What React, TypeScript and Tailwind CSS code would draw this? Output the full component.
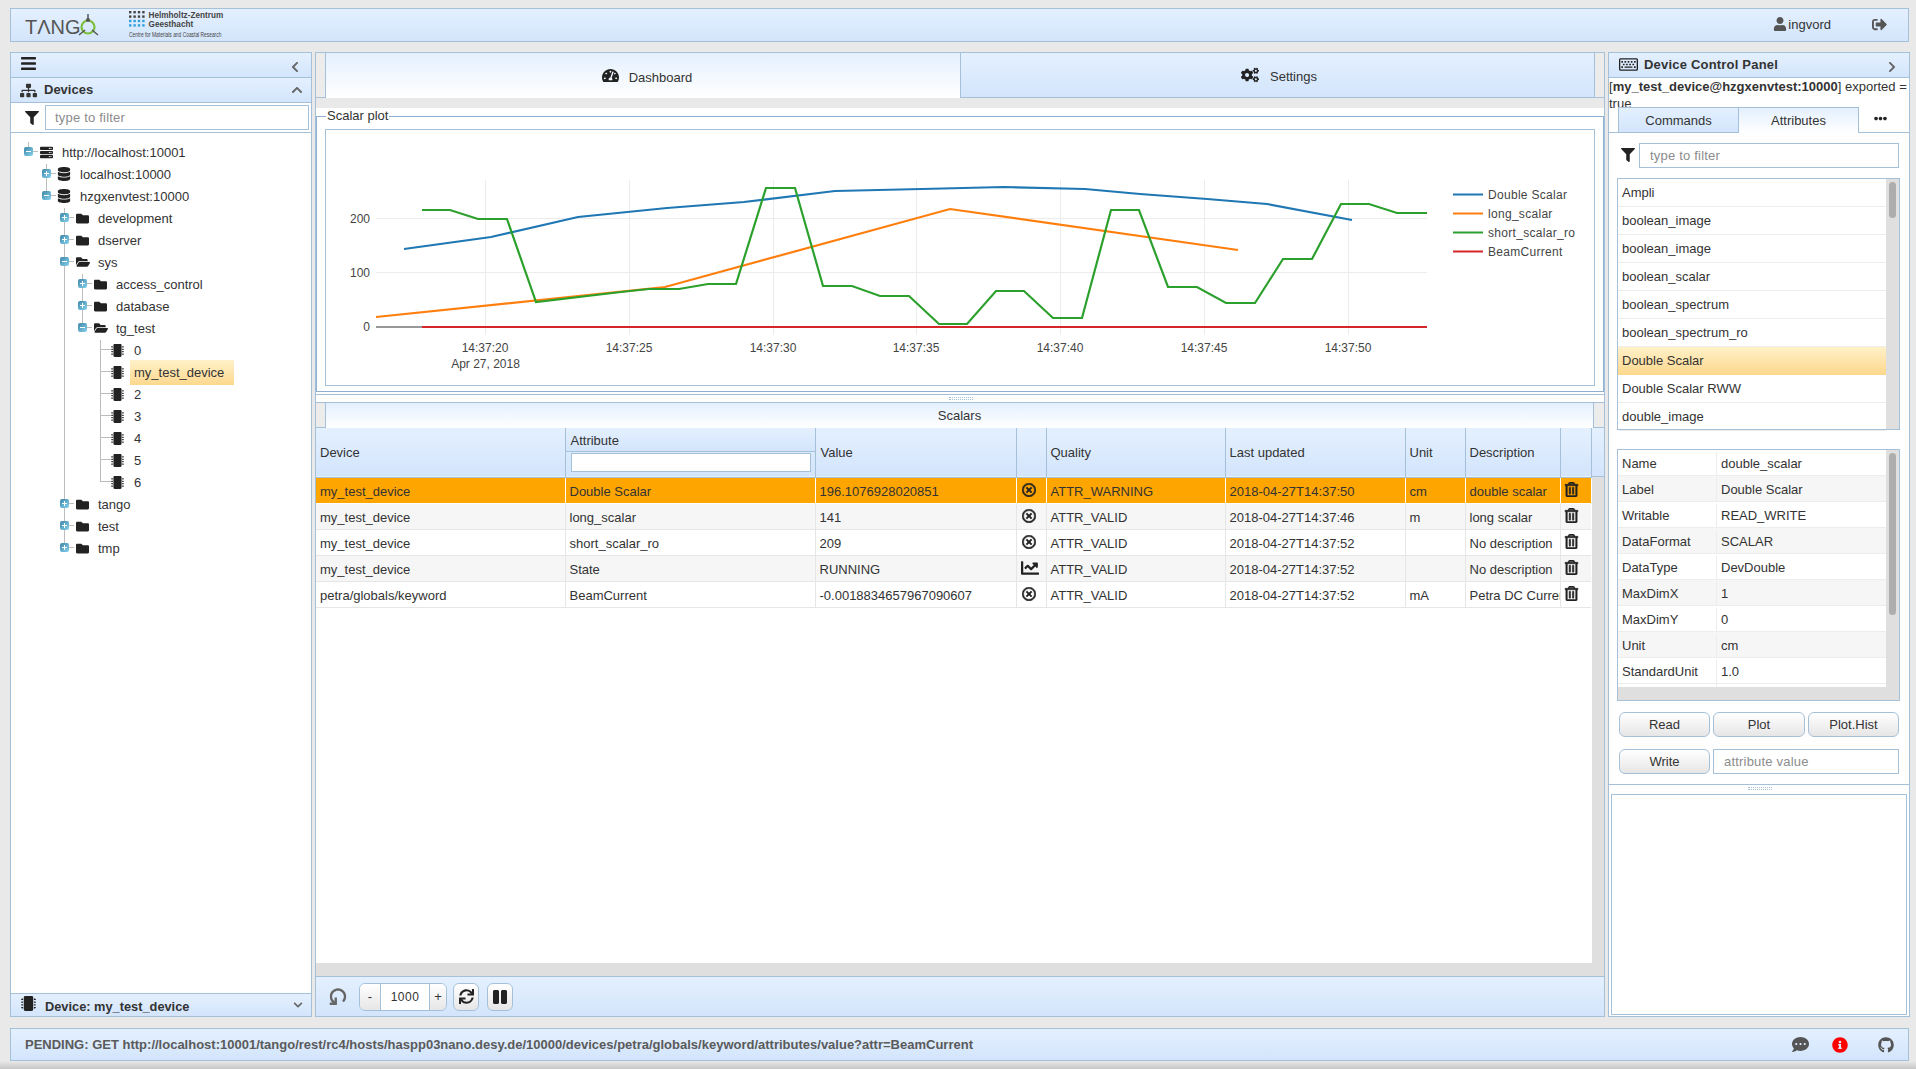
import type { ReactNode } from "react";
import {
  FaBars,
  FaChartLine,
  FaChevronDown,
  FaChevronLeft,
  FaChevronRight,
  FaChevronUp,
  FaCogs,
  FaCommentDots,
  FaDatabase,
  FaEllipsisH,
  FaFilter,
  FaFolder,
  FaFolderOpen,
  FaGithub,
  FaInfoCircle,
  FaMicrochip,
  FaPause,
  FaRegKeyboard,
  FaRegTimesCircle,
  FaRegTrashAlt,
  FaServer,
  FaSignOutAlt,
  FaSitemap,
  FaSync,
  FaTachometerAlt,
  FaUndo,
  FaUser,
} from "react-icons/fa";

const headerBg = "bg-gradient-to-b from-[#e4f0fe] to-[#d3e5fc]";
const lightBg = "bg-gradient-to-b from-[#e4f0fe] to-white";
const line = "border-[#a5c1d9]";

type TreeRow = {
  label: string;
  depth: number;
  kind: "server" | "db" | "folder" | "open" | "chip";
  open?: boolean;
  selected?: boolean;
};

const treeRows: TreeRow[] = [
  { label: "http://localhost:10001", depth: 0, kind: "server", open: true },
  { label: "localhost:10000", depth: 1, kind: "db" },
  { label: "hzgxenvtest:10000", depth: 1, kind: "db", open: true },
  { label: "development", depth: 2, kind: "folder" },
  { label: "dserver", depth: 2, kind: "folder" },
  { label: "sys", depth: 2, kind: "open", open: true },
  { label: "access_control", depth: 3, kind: "folder" },
  { label: "database", depth: 3, kind: "folder" },
  { label: "tg_test", depth: 3, kind: "open", open: true },
  { label: "0", depth: 4, kind: "chip" },
  { label: "my_test_device", depth: 4, kind: "chip", selected: true },
  { label: "2", depth: 4, kind: "chip" },
  { label: "3", depth: 4, kind: "chip" },
  { label: "4", depth: 4, kind: "chip" },
  { label: "5", depth: 4, kind: "chip" },
  { label: "6", depth: 4, kind: "chip" },
  { label: "tango", depth: 2, kind: "folder" },
  { label: "test", depth: 2, kind: "folder" },
  { label: "tmp", depth: 2, kind: "folder" },
];

const depthPad = ["pl-[13px]", "pl-[31px]", "pl-[49px]", "pl-[67px]", "pl-[85px]"];

const scalars = [
  ["my_test_device", "Double Scalar", "196.1076928020851", "x", "ATTR_WARNING", "2018-04-27T14:37:50", "cm", "double scalar"],
  ["my_test_device", "long_scalar", "141", "x", "ATTR_VALID", "2018-04-27T14:37:46", "m", "long scalar"],
  ["my_test_device", "short_scalar_ro", "209", "x", "ATTR_VALID", "2018-04-27T14:37:52", "", "No description"],
  ["my_test_device", "State", "RUNNING", "chart", "ATTR_VALID", "2018-04-27T14:37:52", "", "No description"],
  ["petra/globals/keyword", "BeamCurrent", "-0.0018834657967090607", "x", "ATTR_VALID", "2018-04-27T14:37:52", "mA", "Petra DC Current"],
];

const attributes = [
  "Ampli",
  "boolean_image",
  "boolean_image",
  "boolean_scalar",
  "boolean_spectrum",
  "boolean_spectrum_ro",
  "Double Scalar",
  "Double Scalar RWW",
  "double_image",
];

const attrInfo = [
  ["Name", "double_scalar"],
  ["Label", "Double Scalar"],
  ["Writable", "READ_WRITE"],
  ["DataFormat", "SCALAR"],
  ["DataType", "DevDouble"],
  ["MaxDimX", "1"],
  ["MaxDimY", "0"],
  ["Unit", "cm"],
  ["StandardUnit", "1.0"],
];

const series = [
  {
    name: "Double Scalar",
    color: "#1f77b4",
    points:
      "404,249 491,237 578,217 667,208 744,202 835,191 922,189 1004,187 1085,189 1140,194 1207,199 1267,204 1352,220",
  },
  { name: "long_scalar", color: "#ff7f0e", points: "376,317 665,287 950,209 1238,250" },
  {
    name: "short_scalar_ro",
    color: "#2ca02c",
    points:
      "422,210 450,210 478,219 507,219 536,302 621,292 649,289 679,289 708,284 736,284 766,188 795,188 823,286 852,286 880,296 909,296 939,324 967,324 996,291 1024,291 1053,318 1082,318 1111,210 1139,210 1168,287 1197,287 1226,303 1255,303 1283,259 1312,259 1341,204 1369,204 1397,213 1427,213",
  },
  { name: "BeamCurrent", color: "#d62728", points: "422,327 1427,327" },
];

const ticks = [
  { x: 485.5, label: "14:37:20" },
  { x: 629.5, label: "14:37:25" },
  { x: 773.5, label: "14:37:30" },
  { x: 916.5, label: "14:37:35" },
  { x: 1060.5, label: "14:37:40" },
  { x: 1204.5, label: "14:37:45" },
  { x: 1348.5, label: "14:37:50" },
];

function TreeIcon({ kind }: { kind: TreeRow["kind"] }) {
  if (kind === "server") return <FaServer className="text-[13px]" />;
  if (kind === "db") return <FaDatabase className="text-[14px] -ml-[1px]" />;
  if (kind === "folder") return <FaFolder className="text-[13px]" />;
  if (kind === "open") return <FaFolderOpen className="text-[14px]" />;
  return <FaMicrochip className="text-[13px] -ml-[1px]" />;
}

function Expander({ open }: { open?: boolean }) {
  return (
    <span className="flex items-center w-[16px] h-[9px] -mt-[2px] shrink-0">
      <span className="relative w-[9px] h-[9px] rounded-[2px] bg-gradient-to-br from-[#3f87a8] to-[#86d2ee] shrink-0">
        <span className="absolute left-[2px] top-[4px] w-[5px] h-px bg-white" />
        {!open && <span className="absolute left-[4px] top-[2px] w-px h-[5px] bg-white" />}
      </span>
      <span className="w-[5px] h-px bg-[#bdbdbd]" />
    </span>
  );
}

function Tree() {
  return (
    <div className="relative flex-1 bg-white pt-[8px] text-[13px] text-[#333]">
      <div className="absolute left-[17px] top-[9px] w-px h-[5px] bg-[#bdbdbd]" />
      <div className="absolute left-[35px] top-[31px] w-px h-[27px] bg-[#bdbdbd]" />
      <div className="absolute left-[53px] top-[75px] w-px h-[340px] bg-[#bdbdbd]" />
      <div className="absolute left-[71px] top-[141px] w-px h-[53px] bg-[#bdbdbd]" />
      <div className="absolute left-[89px] top-[207px] w-px h-[142px] bg-[#bdbdbd]" />
      {treeRows.map((row, i) => (
        <div key={i} className={`relative flex items-center h-[22px] ${depthPad[row.depth]}`}>
          {row.kind === "chip" ? (
            <span className="flex w-[16px] -mt-[2px] pl-[4px] shrink-0">
              <span className="w-[11px] h-px bg-[#bdbdbd]" />
            </span>
          ) : (
            <Expander open={row.open} />
          )}
          <span className="w-[18px] shrink-0 text-[#222]">
            <TreeIcon kind={row.kind} />
          </span>
          <span
            className={`flex items-center h-[25px] px-[4px] pt-[2px] whitespace-nowrap ${
              row.selected ? "bg-gradient-to-b from-[#fff1c8] to-[#fdd88e] pr-[10px]" : ""
            }`}
          >
            {row.label}
          </span>
        </div>
      ))}
    </div>
  );
}

function LeftPanel() {
  return (
    <aside className={`flex flex-col w-[302px] border ${line} bg-white`}>
      <div className={`flex items-center justify-between h-[25px] pl-[10px] pr-[10px] border-b ${line} ${headerBg}`}>
        <FaBars className="text-[17px] text-[#222] -mt-[4px] -ml-[1px]" />
        <FaChevronLeft className="text-[12px] text-[#666] mt-[4px]" />
      </div>
      <div className={`flex items-center justify-between h-[25px] pl-[10px] pr-[8px] border-b ${line} ${headerBg}`}>
        <span className="flex items-center gap-[7px] font-bold text-[13px] text-[#333]">
          <FaSitemap className="text-[17px] text-[#333] -ml-[1px]" />
          Devices
        </span>
        <FaChevronUp className="text-[12px] text-[#666]" />
      </div>
      <div className={`flex items-center h-[30px] border-b ${line} pl-[14px] pr-[2px]`}>
        <FaFilter className="text-[14px] text-[#222] mr-[6px]" />
        <input
          placeholder="type to filter"
          className={`w-[264px] h-[25px] border ${line} px-[9px] text-[13px] tracking-[0.2px] placeholder:text-[#8c8c8c]`}
        />
      </div>
      <Tree />
      <div className={`flex items-center justify-between h-[23px] pl-[10px] pr-[8px] border-t ${line} ${headerBg}`}>
        <span className="flex items-center gap-[9px] font-bold text-[12.8px] text-[#333] pt-[3px]">
          <FaMicrochip className="text-[15px] text-[#222] -mt-[7px]" />
          Device: my_test_device
        </span>
        <FaChevronDown className="text-[10px] text-[#666]" />
      </div>
    </aside>
  );
}

function Chart() {
  return (
    <svg viewBox="326 130 1268 255" className="block w-[1268px] h-[255px] text-[12px]" fill="#444">
      {ticks.map((t) => (
        <line key={t.x} x1={t.x} x2={t.x} y1={180} y2={335} stroke="#ececec" />
      ))}
      <line x1={376} x2={1427} y1={218.5} y2={218.5} stroke="#ececec" />
      <line x1={376} x2={1427} y1={272.5} y2={272.5} stroke="#ececec" />
      <line x1={376} x2={422} y1={327} y2={327} stroke="#333" />
      {series.map((s) => (
        <polyline key={s.name} points={s.points} fill="none" stroke={s.color} strokeWidth={2.2} />
      ))}
      <text x={370} y={222.5} textAnchor="end">200</text>
      <text x={370} y={277} textAnchor="end">100</text>
      <text x={370} y={331} textAnchor="end">0</text>
      {ticks.map((t) => (
        <text key={t.label} x={t.x - 0.5} y={352} textAnchor="middle">
          {t.label}
        </text>
      ))}
      <text x={485.5} y={368} textAnchor="middle">Apr 27, 2018</text>
      {series.map((s, i) => (
        <g key={s.name}>
          <line x1={1453} x2={1483} y1={194.5 + i * 19} y2={194.5 + i * 19} stroke={s.color} strokeWidth={2} />
          <text x={1488} y={198.5 + i * 19} letterSpacing={0.3}>
            {s.name}
          </text>
        </g>
      ))}
    </svg>
  );
}

function PlotSection() {
  return (
    <div className="bg-white">
      <fieldset className="w-[1287px] h-[284px] border border-[#8fb0d0] px-[8px]">
        <legend className="ml-[1px] px-[1px] h-[16px] leading-[16px] text-[13px] text-[#333]">Scalar plot</legend>
        <div className={`mt-[5px] w-[1270px] h-[257px] border ${line}`}>
          <Chart />
        </div>
      </fieldset>
      <div className={`relative h-[8px] mt-[2px] border-t ${line}`}>
        <div className="absolute left-[633px] top-[2px] w-[24px] h-[3px] border-y border-dotted border-[#a5c1d9]" />
      </div>
    </div>
  );
}

function StatusCellIcon({ type }: { type: string }) {
  if (type === "chart") return <FaChartLine className="text-[18px] text-[#222] -mt-[4px]" />;
  return <FaRegTimesCircle className="text-[14px] text-[#222] stroke-current stroke-[24px] ml-[1px] -mt-[5px]" />;
}

const headCell = `border-r ${line} px-[4px] text-left font-normal align-middle`;

function ScalarsTable() {
  return (
    <table className="self-start table-fixed w-[1275px] border-collapse text-[13px] text-[#333]">
      <colgroup>
        <col className="w-[249px]" />
        <col className="w-[250px]" />
        <col className="w-[201px]" />
        <col className="w-[30px]" />
        <col className="w-[179px]" />
        <col className="w-[180px]" />
        <col className="w-[60px]" />
        <col className="w-[95px]" />
        <col className="w-[31px]" />
      </colgroup>
      <thead>
        <tr className={`h-[49px] border-b ${line} ${headerBg}`}>
          <th className={headCell}>Device</th>
          <th className={`border-r ${line} p-0 font-normal align-top`}>
            <div className={`flex items-center h-[24px] px-[5px] pt-[2px] border-b ${line} ${headerBg}`}>Attribute</div>
            <div className="pt-[1px] pl-[5px]">
              <input className={`block w-[240px] h-[19px] bg-white border ${line}`} />
            </div>
          </th>
          <th className={`${headCell} pl-[5px]`}>Value</th>
          <th className={headCell} />
          <th className={headCell}>Quality</th>
          <th className={headCell}>Last updated</th>
          <th className={headCell}>Unit</th>
          <th className={headCell}>Description</th>
          <th className={headCell} />
        </tr>
      </thead>
      <tbody>
        {scalars.map((row, i) => {
          const warn = i === 0;
          const bg = warn ? "bg-[#ffa500]" : i % 2 === 1 ? "bg-[#f6f6f6]" : "bg-white";
          const cell = `h-[26px] px-[4px] pt-[4px] pb-0 border-r border-b whitespace-nowrap overflow-hidden ${
            warn ? "border-white" : "border-[#e6e6e6]"
          }`;
          return (
            <tr key={i} className={bg}>
              <td className={cell}>{row[0]}</td>
              <td className={cell}>{row[1]}</td>
              <td className={cell}>{row[2]}</td>
              <td className={cell}>
                <StatusCellIcon type={row[3]} />
              </td>
              <td className={cell}>{row[4]}</td>
              <td className={cell}>{row[5]}</td>
              <td className={cell}>{row[6]}</td>
              <td className={`${cell} pr-0`}>{row[7]}</td>
              <td className={`${cell} border-r-0`}>
                <FaRegTrashAlt className="text-[15px] text-[#222] stroke-current stroke-[20px] -ml-[1px] -mt-[5px]" />
              </td>
            </tr>
          );
        })}
      </tbody>
    </table>
  );
}

function Toolbar() {
  const btn = `flex items-center justify-center w-[26px] h-[28px] rounded-[6px] border ${line} bg-gradient-to-b from-white to-[#e6e6e6] text-[#222]`;
  return (
    <div className={`flex items-center h-[40px] pl-[13px] border-t ${line} ${headerBg}`}>
      <FaUndo className="text-[17px] text-[#666] w-[18px] -rotate-90" />
      <div className={`flex items-center ml-[12px] w-[88px] h-[28px] rounded-[6px] border ${line} overflow-hidden text-[13px] text-[#333]`}>
        <span className="flex items-center justify-center w-[20px] h-full bg-gradient-to-b from-white to-[#e6e6e6]">-</span>
        <span className={`flex items-center justify-center w-[50px] h-full bg-white border-x ${line} tracking-[0.5px] text-[12px]`}>1000</span>
        <span className="flex items-center justify-center flex-1 h-full bg-gradient-to-b from-white to-[#e6e6e6]">+</span>
      </div>
      <span className={`${btn} ml-[6px]`}>
        <FaSync className="text-[15px]" />
      </span>
      <span className={`${btn} ml-[8px]`}>
        <FaPause className="text-[16px]" />
      </span>
    </div>
  );
}

function CenterPanel() {
  return (
    <main className={`flex flex-col w-[1290px] border ${line} bg-[#e9e9e9]`}>
      <div className="flex h-[45px] text-[13px] text-[#333]">
        <div className={`w-[10px] border-r border-b ${line} bg-[#ececec]`} />
        <div className={`flex items-center justify-center gap-[10px] w-[634px] pl-[8px] pt-[4px] ${lightBg}`}>
          <FaTachometerAlt className="text-[17px] text-[#222] -mt-[4px]" />
          Dashboard
        </div>
        <div className={`flex items-center justify-center gap-[11px] w-[634px] pl-[3px] pt-[3px] border-l border-b ${line} ${headerBg}`}>
          <FaCogs className="text-[18px] text-[#222] -mt-[4px]" />
          Settings
        </div>
        <div className={`flex-1 border-l border-b ${line} bg-[#ececec]`} />
      </div>
      <div className="h-[10px]" />
      <PlotSection />
      <div className={`flex h-[26px] border-t ${line} text-[13px] text-[#333]`}>
        <div className={`w-[10px] border-r border-b ${line} bg-[#ececec]`} />
        <div className={`flex items-center justify-center w-[1267px] ${lightBg}`}>Scalars</div>
        <div className={`flex-1 border-l border-b ${line} bg-[#ececec]`} />
      </div>
      <div className="flex flex-1 min-h-0 bg-white">
        <ScalarsTable />
        <div className="flex flex-col flex-1">
          <div className={`h-[49px] border-b ${line} ${headerBg}`} />
          <div className="flex-1 bg-[#dfdfdf]" />
        </div>
      </div>
      <div className="h-[13px] bg-[#dfdfdf]" />
      <Toolbar />
    </main>
  );
}

function SmallButton({ children, className }: { children: ReactNode; className: string }) {
  return (
    <button className={`h-[25px] rounded-[6px] border ${line} bg-gradient-to-b from-white to-[#e6e6e6] text-[13px] text-[#333] ${className}`}>
      {children}
    </button>
  );
}

function RightPanel() {
  return (
    <aside className={`flex flex-col w-[302px] border ${line} bg-white text-[13px] text-[#333]`}>
      <div className={`flex items-center justify-between h-[25px] pl-[10px] pr-[11px] border-b ${line} ${headerBg}`}>
        <span className="flex items-center gap-[6px] font-bold tracking-[0.2px]">
          <FaRegKeyboard className="text-[19px] text-[#222] -mt-[2px]" />
          Device Control Panel
        </span>
        <FaChevronRight className="text-[12px] text-[#666] mt-[3px]" />
      </div>
      <div className="h-[29px] leading-[17px] pt-0">
        [<b>my_test_device@hzgxenvtest:10000</b>] exported = true
      </div>
      <div className={`relative flex h-[26px] pl-[9px] border-b ${line}`}>
        <div className={`flex items-center justify-center w-[121px] h-[26px] pt-[1px] border ${line} ${headerBg}`}>Commands</div>
        <div className={`flex items-center justify-center w-[120px] h-[26px] border-t border-r ${line} bg-gradient-to-b from-[#e4f0fe] to-white`}>Attributes</div>
        <div className="flex items-center justify-center w-[42px] bg-white">
          <FaEllipsisH className="text-[13px] text-[#222] -mt-[2px]" />
        </div>
      </div>
      <div className="flex items-center h-[24px] mt-[10px] pl-[12px]">
        <FaFilter className="text-[14px] text-[#222] mr-[4px]" />
        <input
          placeholder="type to filter"
          className={`w-[260px] h-[25px] border ${line} px-[10px] tracking-[0.2px] placeholder:text-[#8c8c8c]`}
        />
      </div>
      <div className={`flex mt-[11px] ml-[8px] w-[283px] h-[252px] border ${line}`}>
        <ul className="flex-1">
          {attributes.map((name, i) => (
            <li
              key={i}
              className={`flex items-center h-[28px] pl-[4px] border-b ${
                name === "Double Scalar" ? "bg-gradient-to-b from-[#fff1c8] to-[#fdd88e] border-[#fdd88e]" : "border-[#ededed]"
              }`}
            >
              {name}
            </li>
          ))}
        </ul>
        <div className="w-[13px] bg-[#dfdfdf] pt-[3px] pl-[3px]">
          <div className="w-[7px] h-[36px] rounded-[4px] bg-[#adadad]" />
        </div>
      </div>
      <div className={`flex flex-col mt-[19px] ml-[8px] w-[283px] h-[252px] border ${line}`}>
        <div className="flex flex-1 min-h-0">
          <div className="flex-1">
            {attrInfo.map(([k, v], i) => (
              <div key={k} className={`flex items-center h-[26px] pt-[2px] border-b border-[#ededed] ${i % 2 === 1 ? "bg-[#f6f6f6]" : "bg-white"}`}>
                <span className="flex items-center w-[99px] h-full pl-[4px] border-r border-[#ededed]">{k}</span>
                <span className="pl-[4px]">{v}</span>
              </div>
            ))}
            <div className="h-[4px] w-full flex">
              <span className="w-[99px] border-r border-[#ededed]" />
            </div>
          </div>
          <div className="w-[13px] bg-[#dfdfdf] pt-[3px] pl-[3px]">
            <div className="w-[7px] h-[162px] rounded-[4px] bg-[#adadad]" />
          </div>
        </div>
        <div className="h-[13px] bg-[#dfdfdf]" />
      </div>
      <div className="flex gap-[3px] mt-[11px] ml-[10px]">
        <SmallButton className="w-[91px]">Read</SmallButton>
        <SmallButton className="w-[92px]">Plot</SmallButton>
        <SmallButton className="w-[91px]">Plot.Hist</SmallButton>
      </div>
      <div className="flex gap-[3px] mt-[12px] ml-[10px]">
        <SmallButton className="w-[91px]">Write</SmallButton>
        <input
          placeholder="attribute value"
          className={`w-[186px] h-[25px] border ${line} px-[10px] tracking-[0.2px] placeholder:text-[#8c8c8c]`}
        />
      </div>
      <div className={`relative h-[10px] mt-[10px] border-t ${line}`}>
        <div className="absolute left-[139px] top-[2px] w-[24px] h-[3px] border-y border-dotted border-[#a5c1d9]" />
      </div>
      <div className={`flex-1 mx-[2px] mb-[1px] border ${line}`} />
    </aside>
  );
}

function Logos() {
  const cols = [0, 1, 2, 3];
  return (
    <div className="flex items-center">
      <span className="ml-[14px] text-[20px] leading-none text-[#555] mt-[3px]">TΛNG</span>
      <svg viewBox="0 0 22 24" className="block w-[22px] h-[24px] -ml-[3px]">
        <circle cx="10" cy="14" r="6.5" fill="none" stroke="#7cbf3f" strokeWidth="2.2" />
        <path d="M10 1 L10 8 M1 22 L7 17 M20 22 L14 17" stroke="#555" strokeWidth="1.5" fill="none" />
        <circle cx="10" cy="7" r="2" fill="#555" />
      </svg>
      <div className="relative ml-[29px] w-[100px] h-[28px]">
        <svg viewBox="0 0 16 16" className="absolute left-0 top-0 block w-[16px] h-[16px]">
          {cols.map((c) =>
            cols.map((r) => (
              <rect key={`${c}${r}`} x={c * 4.4} y={r * 4.4} width="2.4" height="2.4" fill={r < 2 ? "#444" : "#2f9fe0"} />
            )),
          )}
        </svg>
        <div className="absolute left-[20px] top-[1px] text-[8.2px] font-bold leading-[8.5px] text-[#444] whitespace-nowrap">
          Helmholtz-Zentrum
          <br />
          Geesthacht
        </div>
        <div className="absolute left-0 top-[20px] text-[6.5px] leading-[8px] whitespace-nowrap text-[#444] scale-x-75 origin-left">
          Centre for Materials and Coastal Research
        </div>
      </div>
    </div>
  );
}

export default function App() {
  return (
    <div className="flex flex-col w-[1916px] h-[1069px] overflow-hidden bg-[#e9e9e9] [font-family:'Liberation_Sans',sans-serif]">
      <header className={`flex items-center justify-between mt-[8px] ml-[10px] w-[1899px] h-[34px] border ${line} ${headerBg}`}>
        <Logos />
        <div className="flex items-center text-[13px] text-[#333]">
          <FaUser className="text-[14px] text-[#555] mr-[1px] -mt-[2px]" />
          ingvord
          <FaSignOutAlt className="text-[15px] text-[#555] ml-[41px] mr-[21px] -mt-[1px]" />
        </div>
      </header>
      <div className="flex gap-[3px] mt-[10px] ml-[10px] h-[965px]">
        <LeftPanel />
        <CenterPanel />
        <RightPanel />
      </div>
      <footer className={`flex items-center justify-between mt-[11px] ml-[10px] w-[1899px] h-[33px] border ${line} ${headerBg}`}>
        <span className="pl-[14px] text-[13px] font-bold text-[#5a5a5a] whitespace-nowrap">
          PENDING: GET http://localhost:10001/tango/rest/rc4/hosts/haspp03nano.desy.de/10000/devices/petra/globals/keyword/attributes/value?attr=BeamCurrent
        </span>
        <span className="flex items-center pr-[14px] text-[#555]">
          <FaCommentDots className="text-[17px]" />
          <FaInfoCircle className="text-[16px] text-[#ff0000] ml-[23px]" />
          <FaGithub className="text-[16px] ml-[30px]" />
        </span>
      </footer>
      <div className="flex-1 bg-gradient-to-b from-[#e9e9e9] to-[#c6c6c6]" />
    </div>
  );
}
